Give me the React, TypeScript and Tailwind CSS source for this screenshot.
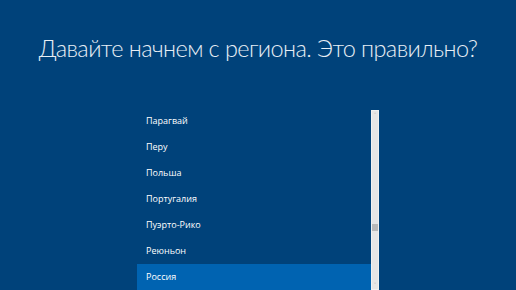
const regions = [
  "Парагвай",
  "Перу",
  "Польша",
  "Португалия",
  "Пуэрто-Рико",
  "Реюньон",
  "Россия",
];

export default function App() {
  const selected = "Россия";

  return (
    <div
      className="flex h-[290px] w-[516px] flex-col overflow-hidden bg-[#00427a] text-white"
      style={{ fontFamily: '"Open Sans", "Noto Sans", sans-serif' }}
    >
      {/* Title */}
      <div className="flex h-[108px] justify-center pt-[31px]">
        <h1
          className="whitespace-nowrap text-[23.5px] font-light leading-[34px] tracking-[-0.6px] text-[#e8eef5]"
          style={{ fontFamily: 'Lato, "Noto Sans", sans-serif' }}
        >
          Давайте начнем с региона. Это правильно?
        </h1>
      </div>

      {/* Region list */}
      <div className="flex justify-center">
        <ul className="w-[234px]">
          {regions.map((r) => (
            <li
              key={r}
              className={`flex h-[26px] items-center pl-[9px] text-[9px] ${
                r === selected ? "bg-[#0063b1]" : ""
              }`}
            >
              {r}
            </li>
          ))}
        </ul>

        {/* Scrollbar */}
        <div className="mt-[2px] flex h-[180px] w-[8px] flex-col items-center border border-[#f2f2f2] bg-[#e6e6e6]">
          <span className="mt-[1px] text-[6px] leading-[6px] text-[#a0a0a0]">˄</span>
          <div className="mt-[106px] h-[7px] w-full bg-[#b9b9b9]" />
          <div className="flex-1" />
          <span className="mb-[1px] text-[6px] leading-[6px] text-[#a0a0a0]">˅</span>
        </div>
      </div>
    </div>
  );
}
